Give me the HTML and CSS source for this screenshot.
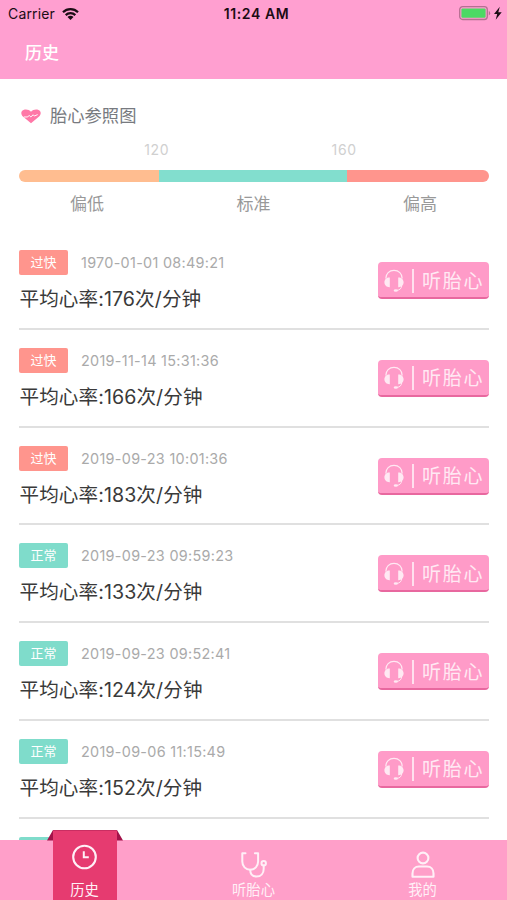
FILE: index.html
```html
<!DOCTYPE html>
<html lang="zh-CN">
<head>
    <meta charset="UTF-8">
    <meta name="viewport" content="width=device-width, initial-scale=1.0">
    <title>历史</title>
    <link rel="stylesheet" href="styles.css">
</head>
<body>
    <svg class="symbols" width="0" height="0">
        <symbol id="headset" viewBox="0 0 20 24">
            <path d="M1.800 9.500C1.800 4.600 5.300 1.300 10 1.300s8.200 3.300 8.200 8.200" fill="none" stroke="currentColor" stroke-width="1.200"/>
            <path d="M5.800 8.400v9.800C2.900 18.400.4 16.400.4 13.300s2.500-5.100 5.400-4.900zM14.200 8.400v9.800c2.900.2 5.400-1.800 5.400-4.900s-2.500-5.100-5.400-4.900z" fill="currentColor"/>
            <path d="M17.800 16.500c-.3 2.900-2 4.600-5 4.900" fill="none" stroke="currentColor" stroke-width="1"/>
            <ellipse cx="11.800" cy="21.500" rx="2.100" ry="1.300" fill="currentColor"/>
        </symbol>
    </svg>

    <header class="header">
        <div class="status">
            <div class="carrier">
                <span>Carrier</span>
                <svg class="wifi" viewBox="0 0 17 12">
                    <path d="M1 4.300a10.600 10.600 0 0 1 15 0M3.700 7.100a6.800 6.800 0 0 1 9.600 0" fill="none" stroke="#1b0c14" stroke-width="2.200"/>
                    <path d="M8.500 12 5.500 9.100a4.200 4.200 0 0 1 6 0z" fill="#1b0c14"/>
                </svg>
            </div>
            <span class="clock">11:24 AM</span>
            <svg class="battery" viewBox="0 0 44 15">
                <rect x=".7" y=".7" width="27.600" height="12.800" rx="3" fill="none" stroke="#b56f91" stroke-width="1.300"/>
                <rect x="2.400" y="2.400" width="24.200" height="9.400" rx="1.200" fill="#4cd964"/>
                <path d="M29.800 5v4.400q1.400-.6 1.400-2.200T29.800 5z" fill="#b56f91"/>
                <path d="M40.800.8 35 8h3.200l-1.500 5.700 6-7.500h-3.400z" fill="#1b0c14"/>
            </svg>
        </div>
        <h1 class="title">历史</h1>
    </header>

    <main class="content">
        <section class="reference">
            <h2 class="reference-title">
                <svg class="heart" viewBox="0 0 21 15">
                    <path d="M10.500 14.700 2 7.600C-.5 5-.1 1.600 2.600.6 5.500-.4 8.500.3 10.500 2.500 12.500.3 15.500-.4 18.400.6c2.700 1 3.100 4.400.6 7z" fill="#ff78a7"/>
                    <path d="M3 8h4l1.600-1.700L10.300 8l2.500-2.300L14 7l3.500-1.500" fill="none" stroke="#fff" stroke-width="1"/>
                </svg>
                <span>胎心参照图</span>
            </h2>
            <div class="limits">
                <span>120</span>
                <span>160</span>
            </div>
            <div class="scale">
                <div class="scale-low"></div>
                <div class="scale-normal"></div>
                <div class="scale-high"></div>
            </div>
            <div class="labels">
                <span>偏低</span>
                <span>标准</span>
                <span>偏高</span>
            </div>
        </section>

        <ul class="records">
            <li class="record">
                <div class="info">
                    <div class="meta"><span class="badge fast">过快</span><span class="time">1970-01-01 08:49:21</span></div>
                    <div class="rate">平均心率:176次/分钟</div>
                </div>
                <button class="listen"><svg class="headset"><use href="#headset"/></svg><span>听胎心</span></button>
            </li>
            <li class="record">
                <div class="info">
                    <div class="meta"><span class="badge fast">过快</span><span class="time">2019-11-14 15:31:36</span></div>
                    <div class="rate">平均心率:166次/分钟</div>
                </div>
                <button class="listen"><svg class="headset"><use href="#headset"/></svg><span>听胎心</span></button>
            </li>
            <li class="record">
                <div class="info">
                    <div class="meta"><span class="badge fast">过快</span><span class="time">2019-09-23 10:01:36</span></div>
                    <div class="rate">平均心率:183次/分钟</div>
                </div>
                <button class="listen"><svg class="headset"><use href="#headset"/></svg><span>听胎心</span></button>
            </li>
            <li class="record">
                <div class="info">
                    <div class="meta"><span class="badge normal">正常</span><span class="time">2019-09-23 09:59:23</span></div>
                    <div class="rate">平均心率:133次/分钟</div>
                </div>
                <button class="listen"><svg class="headset"><use href="#headset"/></svg><span>听胎心</span></button>
            </li>
            <li class="record">
                <div class="info">
                    <div class="meta"><span class="badge normal">正常</span><span class="time">2019-09-23 09:52:41</span></div>
                    <div class="rate">平均心率:124次/分钟</div>
                </div>
                <button class="listen"><svg class="headset"><use href="#headset"/></svg><span>听胎心</span></button>
            </li>
            <li class="record">
                <div class="info">
                    <div class="meta"><span class="badge normal">正常</span><span class="time">2019-09-06 11:15:49</span></div>
                    <div class="rate">平均心率:152次/分钟</div>
                </div>
                <button class="listen"><svg class="headset"><use href="#headset"/></svg><span>听胎心</span></button>
            </li>
            <li class="record">
                <div class="info">
                    <div class="meta"><span class="badge normal"></span></div>
                </div>
            </li>
        </ul>
    </main>

    <nav class="tabs">
        <a class="tab active">
            <svg class="ribbon" viewBox="0 0 76 70">
                <path d="M6 0 0 10.500h6zM70 0l6 10.500h-6z" fill="#a3124a"/>
                <path d="M6 0h64v70H6z" fill="#e63b70"/>
                <path d="M6 0h64v1H6z" fill="#c92e62"/>
            </svg>
            <svg class="icon" viewBox="0 0 28 28" fill="none" stroke="currentColor">
                <circle cx="13.500" cy="14" r="11.300" stroke-width="2.100"/>
                <path d="M12.800 8.300v6h5" stroke-width="2"/>
            </svg>
            <span>历史</span>
        </a>
        <a class="tab">
            <svg class="icon" viewBox="0 0 28 28" fill="none" stroke="currentColor" stroke-width="2" stroke-linecap="round" stroke-linejoin="round">
                <path d="M5.500 2.200H2.300v8.300c0 4.700 3.300 8.200 7.900 8.200s7.900-3.500 7.900-8.200V2.200h-3.200"/>
                <path d="M10.200 18.700c0 4.300 2.400 6.800 6.200 6.800 4.700 0 7.300-3.200 7.300-7.800v-3.100"/>
                <circle cx="23.700" cy="12.300" r="2.200"/>
            </svg>
            <span>听胎心</span>
        </a>
        <a class="tab">
            <svg class="icon" viewBox="0 0 28 28" fill="none" stroke="currentColor" stroke-width="2.100" stroke-linejoin="round">
                <circle cx="14" cy="7" r="5.400"/>
                <path d="M3.500 25.700v-3.200c0-4.300 2.700-7 6.500-7h8c3.800 0 6.500 2.700 6.500 7v3.200z"/>
            </svg>
            <span>我的</span>
        </a>
    </nav>
</body>
</html>
```
FILE: styles.css
```css
* {
    box-sizing: border-box;
}

body {
    margin: 0;
    height: 900px;
    display: flex;
    flex-direction: column;
    overflow: hidden;
    background-color: #fff;
    font-family: Inter, "Noto Sans CJK SC", sans-serif;
}

svg {
    display: block;
    flex: none;
}

.symbols {
    position: absolute;
}

.header {
    height: 79px;
    flex: none;
    background-color: #ff9fd0;
}

.status {
    height: 27px;
    padding: 0 4px 0 8px;
    display: grid;
    grid-template-columns: 1fr auto 1fr;
    align-items: center;
    color: #1b0c14;
    font-size: 14px;
}

.carrier {
    display: flex;
    align-items: center;
    gap: 7px;
    letter-spacing: 0.15px;
}

.wifi {
    width: 17px;
    height: 12px;
}

.clock {
    padding-left: 2px;
    font-weight: 600;
    letter-spacing: 0.6px;
}

.battery {
    width: 44px;
    height: 15px;
    justify-self: end;
}

.title {
    margin: 13px 0 0 25px;
    color: #fff;
    font-size: 17px;
    font-weight: 500;
    line-height: 26px;
}

.content {
    flex: 1;
    min-height: 0;
    padding: 0 18px 0 19px;
    overflow: hidden;
}

.reference {
    height: 151px;
    padding-top: 24px;
}

.reference-title {
    margin: 0;
    padding-left: 2px;
    display: flex;
    align-items: center;
    gap: 9px;
    color: #777a80;
    font-size: 17.3px;
    font-weight: 400;
    line-height: 26px;
}

.heart {
    width: 20px;
    height: 15px;
}

.limits {
    margin-top: 11px;
    padding: 0 51px 0 44px;
    display: flex;
    justify-content: space-around;
    color: #d0d0d0;
    font-size: 14px;
    letter-spacing: 0.7px;
    line-height: 20px;
}

.scale {
    margin-top: 10px;
    height: 12px;
    display: flex;
    border-radius: 6px;
    overflow: hidden;
}

.scale-low {
    width: 140px;
    background-color: #ffbd90;
}

.scale-normal {
    width: 188px;
    background-color: #82dece;
}

.scale-high {
    flex: 1;
    background-color: #ff958d;
}

.labels {
    margin-top: 10px;
    padding: 0 52px 0 51px;
    display: flex;
    justify-content: space-between;
    color: #999;
    font-size: 17px;
    line-height: 24px;
}

.records {
    margin: 0;
    padding: 0;
    list-style: none;
}

.record {
    height: 97.75px;
    padding-top: 20px;
    display: flex;
    justify-content: space-between;
    align-items: flex-start;
}

/* the divider belongs to the top of every row but the first */
.record + .record {
    box-shadow: inset 0 2px #e0e0e0;
}

.meta {
    display: flex;
    align-items: center;
    gap: 13px;
}

.badge {
    width: 49px;
    height: 25px;
    border-radius: 2px;
    color: #fff;
    font-size: 13px;
    line-height: 24px;
    text-align: center;
}

.fast {
    background-color: #ff958d;
}

.normal {
    background-color: #7fdccb;
}

.time {
    color: #aaa;
    font-size: 14.4px;
    letter-spacing: 0.3px;
}

.rate {
    margin-top: 9px;
    padding-left: 0.5px;
    color: #3a3a3a;
    font-size: 19.6px;
    letter-spacing: 0.08px;
    line-height: 30px;
}

.listen {
    width: 111px;
    height: 37px;
    margin-top: 12px;
    padding: 2px 0 0 6px;
    display: flex;
    align-items: center;
    border: none;
    border-bottom: 2px solid #e8689f;
    border-radius: 4px;
    background-color: #ff9bc8;
    color: #ffe9f3;
    font-family: inherit;
    font-size: 19px;
    letter-spacing: 1.7px;
    line-height: 24px;
}

.listen span {
    margin-left: 8px;
    padding: 1px 0 0 8px;
    border-left: 2px solid #ffe0ee;
    line-height: 23px;
    white-space: nowrap;
}

.headset {
    width: 20px;
    height: 24px;
}

.tabs {
    height: 60px;
    flex: none;
    display: grid;
    grid-template-columns: repeat(3, 1fr);
    background-color: #ff9fc9;
}

.tab {
    position: relative;
    height: 60px;
    padding-top: 11px;
    display: flex;
    flex-direction: column;
    align-items: center;
    color: #fff0f7;
    font-size: 14.3px;
    line-height: 22px;
}

.active {
    padding-top: 3px;
}

.icon {
    position: relative;
    width: 28px;
    height: 28px;
}

.tab span {
    position: relative;
}

.active span {
    margin-top: 8px;
}

/* folded ribbon sticking out above the tab bar */
.ribbon {
    position: absolute;
    left: 47px;
    bottom: 0;
    width: 76px;
    height: 70px;
}
```
